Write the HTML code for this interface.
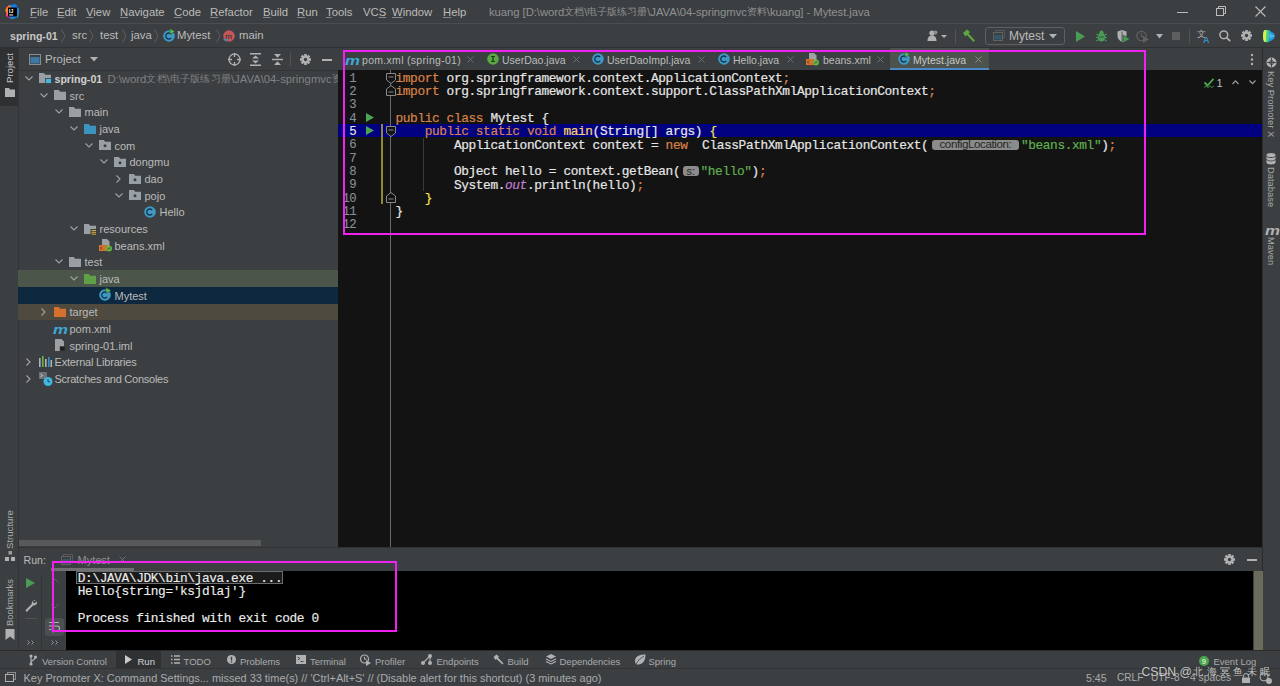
<!DOCTYPE html>
<html><head><meta charset="utf-8"><style>
*{margin:0;padding:0;box-sizing:border-box}
html,body{width:1280px;height:686px;overflow:hidden;background:#3c3f41}
body{position:relative;font-family:"Liberation Sans",sans-serif;font-size:11.3px;color:#bbbbbb}
.a{position:absolute}
.t{position:absolute;white-space:pre;line-height:14px}
.cj{display:inline-block;overflow:hidden;text-align:center;vertical-align:top;font-size:10px}
.code{position:absolute;white-space:pre;font-family:"Liberation Mono",monospace;font-size:12.8px;letter-spacing:-0.38px;line-height:13.33px;color:#e6e6e6;-webkit-text-stroke:0.2px currentColor}
svg{position:absolute;overflow:visible}
u{text-decoration-color:#85888a;text-underline-offset:0.6px}
.kw{color:#d9834a}
.str{color:#5fb04f}
.fn{color:#ffd36e}
.st{color:#c27ed6;font-style:italic}
.br{color:#f4e54d}
</style></head><body>
<div class="a" style="left:0px;top:23px;width:1280px;height:1px;background:#4b4e50;"></div>
<svg style="left:4px;top:4px;" width="16" height="16" viewBox="0 0 16 16"><polygon points="2,3 9,1 15,5 14,13 8,15 2,12" fill="#ff318c"/><polygon points="9,1 15,5 14,13 8,15" fill="#21d789"/><polygon points="5,1 12,0 15,6 13,14 6,15" fill="#087cfa" opacity="0.85"/><polygon points="1,6 5,1 8,4 4,12" fill="#fc801d"/><rect x="4" y="3.5" width="9" height="9" fill="#000"/><rect x="5.2" y="10.5" width="4" height="1" fill="#fff"/><text x="5" y="8.6" font-size="5" fill="#fff" font-family="Liberation Sans" font-weight="bold">IJ</text></svg>
<span class="t" style="left:30px;top:5px;"><u>F</u>ile</span>
<span class="t" style="left:57px;top:5px;"><u>E</u>dit</span>
<span class="t" style="left:86px;top:5px;"><u>V</u>iew</span>
<span class="t" style="left:120px;top:5px;"><u>N</u>avigate</span>
<span class="t" style="left:174px;top:5px;"><u>C</u>ode</span>
<span class="t" style="left:210px;top:5px;"><u>R</u>efactor</span>
<span class="t" style="left:263px;top:5px;"><u>B</u>uild</span>
<span class="t" style="left:297px;top:5px;"><u>R</u>un</span>
<span class="t" style="left:326px;top:5px;"><u>T</u>ools</span>
<span class="t" style="left:363px;top:5px;">VC<u>S</u></span>
<span class="t" style="left:392px;top:5px;"><u>W</u>indow</span>
<span class="t" style="left:443px;top:5px;"><u>H</u>elp</span>
<span class="t" style="left:489px;top:5px;color:#8e9193;letter-spacing:-0.06px">kuang [D:\word<span class="cj" style="width:10px">文</span><span class="cj" style="width:10px">档</span>\<span class="cj" style="width:10px">电</span><span class="cj" style="width:10px">子</span><span class="cj" style="width:10px">版</span><span class="cj" style="width:10px">练</span><span class="cj" style="width:10px">习</span><span class="cj" style="width:10px">册</span>\JAVA\04-springmvc<span class="cj" style="width:10px">资</span><span class="cj" style="width:10px">料</span>\kuang] - Mytest.java</span>
<div class="a" style="left:1177px;top:12px;width:11px;height:1px;background:#bbbbbb;"></div>
<svg style="left:1216px;top:6px;" width="11" height="11" viewBox="0 0 11 11"><rect x="0.5" y="2.5" width="7" height="7" fill="none" stroke="#bbbbbb"/><path d="M2.5 2.5V0.5H9.5V7.5H7.5" fill="none" stroke="#bbbbbb"/></svg>
<svg style="left:1255px;top:6px;" width="11" height="11" viewBox="0 0 11 11"><path d="M0.5 0.5L10.5 10.5M10.5 0.5L0.5 10.5" stroke="#bbbbbb" stroke-width="1.1"/></svg>
<div class="a" style="left:0px;top:47px;width:1280px;height:1px;background:#2f3133;"></div>
<span class="t" style="left:10px;top:29.3px;font-weight:bold;color:#c8c8c8;font-size:10.6px">spring-01</span>
<svg style="left:61px;top:29px;" width="5" height="14" viewBox="0 0 5 14"><path d="M0.5 0.5L4 7L0.5 13.5" fill="none" stroke="#5f6264" stroke-width="0.9"/></svg>
<span class="t" style="left:72px;top:28.3px;">src</span>
<svg style="left:89px;top:29px;" width="5" height="14" viewBox="0 0 5 14"><path d="M0.5 0.5L4 7L0.5 13.5" fill="none" stroke="#5f6264" stroke-width="0.9"/></svg>
<span class="t" style="left:100px;top:28.3px;">test</span>
<svg style="left:121.5px;top:29px;" width="5" height="14" viewBox="0 0 5 14"><path d="M0.5 0.5L4 7L0.5 13.5" fill="none" stroke="#5f6264" stroke-width="0.9"/></svg>
<span class="t" style="left:131px;top:28.3px;">java</span>
<svg style="left:154px;top:29px;" width="5" height="14" viewBox="0 0 5 14"><path d="M0.5 0.5L4 7L0.5 13.5" fill="none" stroke="#5f6264" stroke-width="0.9"/></svg>
<svg style="left:163px;top:30px;" width="12" height="12" viewBox="0 0 12 12"><circle cx="6" cy="6" r="5.8" fill="#3f99c2"/><path d="M8.2 4.2A3 3 0 1 0 8.2 7.8" fill="none" stroke="#15324a" stroke-width="1.3"/><polygon points="7,-1.5 12,1.5 7,4.5" fill="#4fc24f" stroke="#3c3f41" stroke-width="0.6"/></svg>
<span class="t" style="left:177px;top:28.3px;">Mytest</span>
<svg style="left:215.5px;top:29px;" width="5" height="14" viewBox="0 0 5 14"><path d="M0.5 0.5L4 7L0.5 13.5" fill="none" stroke="#5f6264" stroke-width="0.9"/></svg>
<svg style="left:223px;top:30px;" width="12" height="12" viewBox="0 0 12 12"><circle cx="6" cy="6" r="5.8" fill="#c0585a"/><text x="2.3" y="8.6" font-size="8" fill="#2b2b2b" font-family="Liberation Sans">m</text><path d="M0 9l2.5 2.5L5 9z" fill="#3592c4"/></svg>
<span class="t" style="left:239px;top:28.3px;">main</span>
<svg style="left:927px;top:30px;" width="21" height="12" viewBox="0 0 21 12"><circle cx="5" cy="3" r="2.6" fill="#afb1b3"/><path d="M0.5 11c0-4 2-5.5 4.5-5.5s4.5 1.5 4.5 5.5z" fill="#afb1b3"/><circle cx="8.5" cy="2.5" r="2" fill="#8c8e90"/><path d="M14 5l3 3l3-3z" fill="#afb1b3"/></svg>
<div class="a" style="left:955px;top:29px;width:1px;height:15px;background:#515355;"></div>
<svg style="left:962px;top:29px;" width="14" height="14" viewBox="0 0 14 14"><path d="M1 4L5 0.5L8 3L6.5 4.5L13 11.5L11.5 13L5 6L3.5 7.5z" fill="#5ca83e"/></svg>
<div class="a" style="left:985px;top:27px;width:80px;height:18px;background:#3c3f41;border:1px solid #5e6163;border-radius:3px"></div>
<svg style="left:993px;top:30px;" width="12" height="11" viewBox="0 0 12 11"><rect x="2.5" y="0.5" width="9" height="7" fill="none" stroke="#55585a"/><rect x="0.5" y="2.5" width="9" height="8" fill="#3c3f41" stroke="#606264"/><rect x="1.5" y="5" width="7" height="4.5" fill="#36566a"/></svg>
<span class="t" style="left:1009px;top:29px;font-size:12px;color:#bbbbbb">Mytest</span>
<svg style="left:1049px;top:34px;" width="8" height="5" viewBox="0 0 8 5"><path d="M0 0h8L4 4.5z" fill="#afb1b3"/></svg>
<svg style="left:1076px;top:31px;" width="9" height="11" viewBox="0 0 9 11"><path d="M0 0L9 5.5L0 11z" fill="#499c54"/></svg>
<svg style="left:1096px;top:30px;" width="11" height="12" viewBox="0 0 11 12"><ellipse cx="5.5" cy="7" rx="3.6" ry="4.6" fill="#499c54"/><circle cx="5.5" cy="2.5" r="2" fill="#499c54"/><path d="M0.5 4l2 1.5M10.5 4l-2 1.5M0 7.5h2M11 7.5H9M0.5 11l2-1.5M10.5 11l-2-1.5" stroke="#499c54" stroke-width="1.1"/><path d="M3 7h5" stroke="#3c3f41" stroke-width="0.8"/></svg>
<svg style="left:1117px;top:30px;" width="13" height="13" viewBox="0 0 13 13"><path d="M0.5 1.5L5 0L9.5 1.5V6C9.5 9 7 11 5 12C3 11 0.5 9 0.5 6z" fill="#afb1b3"/><path d="M5 1.5V11" stroke="#3c3f41" stroke-width="0.8"/><path d="M6 5L13 9L6 13z" fill="#499c54" stroke="#3c3f41" stroke-width="0.7"/></svg>
<svg style="left:1136px;top:30px;" width="14" height="13" viewBox="0 0 14 13"><circle cx="5.5" cy="6" r="4.7" fill="none" stroke="#5e6062" stroke-width="1.2"/><path d="M5.5 3v3.5h2.5" stroke="#5e6062" fill="none"/><path d="M7 6L13 9.5L7 13z" fill="#5e6062"/></svg>
<svg style="left:1156px;top:34px;" width="7" height="5" viewBox="0 0 7 5"><path d="M0 0h7L3.5 4.5z" fill="#afb1b3"/></svg>
<div class="a" style="left:1172px;top:32px;width:8px;height:8px;background:#5c5e60;"></div>
<div class="a" style="left:1189px;top:29px;width:1px;height:15px;background:#515355;"></div>
<svg style="left:1197px;top:29px;" width="14" height="14" viewBox="0 0 14 14"><text x="0" y="8" font-size="9" fill="#afb1b3" font-family="Liberation Sans">文</text><text x="6" y="13.5" font-size="9" font-weight="bold" fill="#3592c4" font-family="Liberation Sans">A</text></svg>
<svg style="left:1219px;top:30px;" width="12" height="12" viewBox="0 0 12 12"><circle cx="4.8" cy="4.8" r="3.9" fill="none" stroke="#afb1b3" stroke-width="1.5"/><path d="M7.6 7.6L11.2 11.2" stroke="#afb1b3" stroke-width="1.8"/></svg>
<svg style="left:1241px;top:30px;" width="11" height="11" viewBox="0 0 11 11"><rect x="4.2" y="0" width="2.6" height="11" fill="#afb1b3" transform="rotate(0 5.5 5.5)"/><rect x="4.2" y="0" width="2.6" height="11" fill="#afb1b3" transform="rotate(45 5.5 5.5)"/><rect x="4.2" y="0" width="2.6" height="11" fill="#afb1b3" transform="rotate(90 5.5 5.5)"/><rect x="4.2" y="0" width="2.6" height="11" fill="#afb1b3" transform="rotate(135 5.5 5.5)"/><circle cx="5.5" cy="5.5" r="3.96" fill="#afb1b3"/><circle cx="5.5" cy="5.5" r="1.65" fill="#3c3f41"/></svg>
<svg style="left:1262px;top:29px;" width="13" height="14" viewBox="0 0 13 14"><path d="M2 1.5Q6.5 -0.5 12 4.5L13 7L12 9.5Q6.5 14.5 2 12.5Q0 7 2 1.5z" fill="#1f9be0"/><path d="M2 1.5Q5 0.6 7.5 1.8L6.5 12.9Q4 13.6 2 12.5Q0 7 2 1.5z" fill="#3fd08a"/><path d="M2 1.5Q3.5 1 4.5 1.1L3.8 12.9Q2.6 13 2 12.5Q0 7 2 1.5z" fill="#d9ef50"/><path d="M7.5 4.5L13 7L7.5 9.5z" fill="#ffffff" opacity="0.25"/></svg>
<div class="a" style="left:0px;top:48px;width:18px;height:602px;background:#3c3f41;"></div>
<div class="a" style="left:0px;top:48px;width:18px;height:58px;background:#2e3032;"></div>
<div class="a" style="left:18px;top:48px;width:1px;height:602px;background:#323436;"></div>
<span class="t" style="left:2.7px;top:83px;transform-origin:0 0;transform:rotate(-90deg);font-size:9.6px;color:#c8c8c8;line-height:14px">Project</span>
<svg style="left:5px;top:88px;" width="10" height="9" viewBox="0 0 10 9"><path d="M0 0h4l1 1.5h5V9H0z" fill="#afb1b3"/></svg>
<span class="t" style="left:2.7px;top:549px;transform-origin:0 0;transform:rotate(-90deg);font-size:9.6px;color:#a9abad;line-height:14px">Structure</span>
<svg style="left:5px;top:551px;" width="11" height="11" viewBox="0 0 11 11"><rect x="3.5" y="0" width="3.5" height="3.5" fill="#9a9c9e"/><rect x="0" y="6" width="4" height="4" fill="#afb1b3"/><rect x="6" y="6" width="4" height="4" fill="#afb1b3"/></svg>
<span class="t" style="left:2.7px;top:626px;transform-origin:0 0;transform:rotate(-90deg);font-size:9.4px;color:#a9abad;line-height:14px">Bookmarks</span>
<svg style="left:5px;top:629px;" width="10" height="11" viewBox="0 0 10 11"><path d="M0.5 0h9v11L5 7.5L0.5 11z" fill="#afb1b3"/></svg>
<div class="a" style="left:19px;top:70px;width:319px;height:1px;background:#323436;"></div>
<svg style="left:29px;top:54px;" width="12" height="11" viewBox="0 0 12 11"><rect x="0.5" y="0.5" width="11" height="10" fill="none" stroke="#8a8c8e"/><rect x="1.5" y="3" width="9" height="6.5" fill="#3d7aa3"/></svg>
<span class="t" style="left:45px;top:52px;font-size:11.5px;color:#bbbbbb;line-height:14px">Project</span>
<svg style="left:90px;top:57px;" width="8" height="5" viewBox="0 0 8 5"><path d="M0 0h8L4 4.5z" fill="#afb1b3"/></svg>
<svg style="left:228px;top:53px;" width="13" height="13" viewBox="0 0 13 13"><circle cx="6.5" cy="6.5" r="5.5" fill="none" stroke="#afb1b3" stroke-width="1.3"/><path d="M6.5 0v4M6.5 9v4M0 6.5h4M9 6.5h4" stroke="#afb1b3" stroke-width="1.3"/></svg>
<svg style="left:250px;top:53px;" width="12" height="13" viewBox="0 0 12 13"><path d="M0 0.7h11M0 12.3h11" stroke="#afb1b3" stroke-width="1.4"/><path d="M5.5 2.5L9 5.5H2zM5.5 10.5L9 7.5H2z" fill="#afb1b3"/></svg>
<svg style="left:272px;top:53px;" width="12" height="13" viewBox="0 0 12 13"><path d="M0 6.5h11" stroke="#afb1b3" stroke-width="1.4"/><path d="M2 1h7L5.5 4.8zM2 12h7L5.5 8.2z" fill="#afb1b3"/></svg>
<div class="a" style="left:290px;top:52px;width:1px;height:14px;background:#505254;"></div>
<svg style="left:300px;top:54px;" width="11" height="11" viewBox="0 0 11 11"><rect x="4.2" y="0" width="2.6" height="11" fill="#afb1b3" transform="rotate(0 5.5 5.5)"/><rect x="4.2" y="0" width="2.6" height="11" fill="#afb1b3" transform="rotate(45 5.5 5.5)"/><rect x="4.2" y="0" width="2.6" height="11" fill="#afb1b3" transform="rotate(90 5.5 5.5)"/><rect x="4.2" y="0" width="2.6" height="11" fill="#afb1b3" transform="rotate(135 5.5 5.5)"/><circle cx="5.5" cy="5.5" r="3.96" fill="#afb1b3"/><circle cx="5.5" cy="5.5" r="1.65" fill="#3c3f41"/></svg>
<div class="a" style="left:322px;top:59px;width:10px;height:1.6px;background:#afb1b3;"></div>
<div class="a" style="left:18px;top:270px;width:320px;height:17px;background:#4b554a;"></div>
<div class="a" style="left:18px;top:287px;width:320px;height:17px;background:#0d283f;"></div>
<div class="a" style="left:18px;top:304px;width:320px;height:16px;background:#4e4a3f;"></div>
<div class="a" style="left:19px;top:540px;width:242px;height:6px;background:#57595b;"></div>
<svg style="left:24.5px;top:76.03px;" width="8" height="5" viewBox="0 0 8 5"><path d="M0.5 0.5L4 4L7.5 0.5" fill="none" stroke="#a0a2a4" stroke-width="1.1"/></svg>
<svg style="left:39.25px;top:73.03px;" width="12" height="10" viewBox="0 0 12 10"><path d="M0 0h4.8l1.4 1.8H12V10H0z" fill="#98a0a6"/><rect x="6.5" y="5.5" width="6" height="5" fill="#40b6e0" stroke="#3c3f41" stroke-width="0.8"/></svg>
<span class="t" style="left:54.5px;top:71.9px;font-size:11px"><b style="color:#d0d0d0;font-size:10.6px">spring-01</b></span>
<svg style="left:39.5px;top:92.7px;" width="8" height="5" viewBox="0 0 8 5"><path d="M0.5 0.5L4 4L7.5 0.5" fill="none" stroke="#a0a2a4" stroke-width="1.1"/></svg>
<svg style="left:54.25px;top:90.2px;" width="12" height="10" viewBox="0 0 12 10"><path d="M0 0h4.8l1.4 1.8H12V10H0z" fill="#98a0a6"/></svg>
<span class="t" style="left:69.5px;top:88.57000000000001px;font-size:11px">src</span>
<svg style="left:54.5px;top:109.37px;" width="8" height="5" viewBox="0 0 8 5"><path d="M0.5 0.5L4 4L7.5 0.5" fill="none" stroke="#a0a2a4" stroke-width="1.1"/></svg>
<svg style="left:69.25px;top:106.87px;" width="12" height="10" viewBox="0 0 12 10"><path d="M0 0h4.8l1.4 1.8H12V10H0z" fill="#98a0a6"/></svg>
<span class="t" style="left:84.5px;top:105.24000000000001px;font-size:11px">main</span>
<svg style="left:69.5px;top:126.04000000000002px;" width="8" height="5" viewBox="0 0 8 5"><path d="M0.5 0.5L4 4L7.5 0.5" fill="none" stroke="#a0a2a4" stroke-width="1.1"/></svg>
<svg style="left:84.25px;top:123.54000000000002px;" width="12" height="10" viewBox="0 0 12 10"><path d="M0 0h4.8l1.4 1.8H12V10H0z" fill="#3b93bf"/></svg>
<span class="t" style="left:99.5px;top:121.91000000000001px;font-size:11px">java</span>
<svg style="left:84.5px;top:142.71px;" width="8" height="5" viewBox="0 0 8 5"><path d="M0.5 0.5L4 4L7.5 0.5" fill="none" stroke="#a0a2a4" stroke-width="1.1"/></svg>
<svg style="left:99.25px;top:140.21px;" width="12" height="10" viewBox="0 0 12 10"><path d="M0 0h4.8l1.4 1.8H12V10H0z" fill="#98a0a6"/><circle cx="6" cy="5.8" r="1.5" fill="#3c3f41"/></svg>
<span class="t" style="left:114.5px;top:138.57999999999998px;font-size:11px">com</span>
<svg style="left:99.5px;top:159.38000000000002px;" width="8" height="5" viewBox="0 0 8 5"><path d="M0.5 0.5L4 4L7.5 0.5" fill="none" stroke="#a0a2a4" stroke-width="1.1"/></svg>
<svg style="left:114.25px;top:156.88000000000002px;" width="12" height="10" viewBox="0 0 12 10"><path d="M0 0h4.8l1.4 1.8H12V10H0z" fill="#98a0a6"/><circle cx="6" cy="5.8" r="1.5" fill="#3c3f41"/></svg>
<span class="t" style="left:129.5px;top:155.25px;font-size:11px">dongmu</span>
<svg style="left:116.0px;top:174.55000000000004px;" width="5" height="8" viewBox="0 0 5 8"><path d="M0.5 0.5L4 4L0.5 7.5" fill="none" stroke="#a0a2a4" stroke-width="1.1"/></svg>
<svg style="left:129.25px;top:173.55000000000004px;" width="12" height="10" viewBox="0 0 12 10"><path d="M0 0h4.8l1.4 1.8H12V10H0z" fill="#98a0a6"/><circle cx="6" cy="5.8" r="1.5" fill="#3c3f41"/></svg>
<span class="t" style="left:144.5px;top:171.92000000000002px;font-size:11px">dao</span>
<svg style="left:114.5px;top:192.72000000000003px;" width="8" height="5" viewBox="0 0 8 5"><path d="M0.5 0.5L4 4L7.5 0.5" fill="none" stroke="#a0a2a4" stroke-width="1.1"/></svg>
<svg style="left:129.25px;top:190.22000000000003px;" width="12" height="10" viewBox="0 0 12 10"><path d="M0 0h4.8l1.4 1.8H12V10H0z" fill="#98a0a6"/><circle cx="6" cy="5.8" r="1.5" fill="#3c3f41"/></svg>
<span class="t" style="left:144.5px;top:188.59px;font-size:11px">pojo</span>
<svg style="left:144.25px;top:205.89000000000001px;" width="12" height="12" viewBox="0 0 12 12"><circle cx="6" cy="6" r="5.8" fill="#3f99c2"/><path d="M8.2 4.2A3 3 0 1 0 8.2 7.8" fill="none" stroke="#15324a" stroke-width="1.3"/></svg>
<span class="t" style="left:159.5px;top:205.26px;font-size:11px">Hello</span>
<svg style="left:69.5px;top:226.06000000000003px;" width="8" height="5" viewBox="0 0 8 5"><path d="M0.5 0.5L4 4L7.5 0.5" fill="none" stroke="#a0a2a4" stroke-width="1.1"/></svg>
<svg style="left:84.25px;top:223.56000000000003px;" width="12" height="10" viewBox="0 0 12 10"><path d="M0 0h4.8l1.4 1.8H12V10H0z" fill="#98a0a6"/><rect x="6.5" y="5" width="5.5" height="6" fill="#3c3f41"/><path d="M7.5 6.5h4.5M7.5 8.3h4.5M7.5 10.1h4.5" stroke="#d4a93c" stroke-width="1"/></svg>
<span class="t" style="left:99.5px;top:221.93px;font-size:11px">resources</span>
<svg style="left:99.25px;top:239.23000000000005px;" width="13" height="12" viewBox="0 0 13 12"><path d="M3 0h5l2.5 2.5V7H3z" fill="#9ea1a3"/><rect x="0" y="6" width="8" height="6" fill="#d5712e"/><path d="M3 7.5L1.5 9L3 10.5" stroke="#2b2b2b" fill="none" stroke-width="0.8"/><circle cx="10" cy="9.5" r="3" fill="#62b543"/><path d="M8.5 10.5q1.5-2 3-1.5" stroke="#2b2b2b" fill="none" stroke-width="0.7"/></svg>
<span class="t" style="left:114.5px;top:238.60000000000002px;font-size:11px">beans.xml</span>
<svg style="left:54.5px;top:259.4px;" width="8" height="5" viewBox="0 0 8 5"><path d="M0.5 0.5L4 4L7.5 0.5" fill="none" stroke="#a0a2a4" stroke-width="1.1"/></svg>
<svg style="left:69.25px;top:256.9px;" width="12" height="10" viewBox="0 0 12 10"><path d="M0 0h4.8l1.4 1.8H12V10H0z" fill="#98a0a6"/></svg>
<span class="t" style="left:84.5px;top:255.26999999999998px;font-size:11px">test</span>
<svg style="left:69.5px;top:276.07px;" width="8" height="5" viewBox="0 0 8 5"><path d="M0.5 0.5L4 4L7.5 0.5" fill="none" stroke="#a0a2a4" stroke-width="1.1"/></svg>
<svg style="left:84.25px;top:273.57px;" width="12" height="10" viewBox="0 0 12 10"><path d="M0 0h4.8l1.4 1.8H12V10H0z" fill="#5f9f47"/></svg>
<span class="t" style="left:99.5px;top:271.94px;font-size:11px">java</span>
<svg style="left:99.25px;top:289.24px;" width="12" height="12" viewBox="0 0 12 12"><circle cx="6" cy="6" r="5.8" fill="#3f99c2"/><path d="M8.2 4.2A3 3 0 1 0 8.2 7.8" fill="none" stroke="#15324a" stroke-width="1.3"/><polygon points="7,-1.5 12,1.5 7,4.5" fill="#4fc24f" stroke="#3c3f41" stroke-width="0.6"/></svg>
<span class="t" style="left:114.5px;top:288.61px;font-size:11px">Mytest</span>
<svg style="left:41.0px;top:307.91px;" width="5" height="8" viewBox="0 0 5 8"><path d="M0.5 0.5L4 4L0.5 7.5" fill="none" stroke="#a0a2a4" stroke-width="1.1"/></svg>
<svg style="left:54.25px;top:306.91px;" width="12" height="10" viewBox="0 0 12 10"><path d="M0 0h4.8l1.4 1.8H12V10H0z" fill="#d5712e"/></svg>
<span class="t" style="left:69.5px;top:305.28000000000003px;font-size:11px">target</span>
<svg style="left:53.25px;top:323.58px;" width="16" height="10" viewBox="0 0 16 10"><text x="0" y="9.5" font-size="13" font-style="italic" font-weight="bold" fill="#3ea8d8" font-family="Liberation Sans" textLength="15" lengthAdjust="spacingAndGlyphs">m</text></svg>
<span class="t" style="left:69.5px;top:321.95px;font-size:11px">pom.xml</span>
<svg style="left:55.25px;top:339.25px;" width="10" height="12" viewBox="0 0 10 12"><path d="M0 0h6.5L9 2.5V12H0z" fill="#9ea1a3"/><rect x="5" y="7.5" width="5" height="4.5" fill="#1e1e1e" stroke="#3c3f41" stroke-width="0.6"/></svg>
<span class="t" style="left:69.5px;top:338.62px;font-size:11px">spring-01.iml</span>
<svg style="left:26.0px;top:357.92px;" width="5" height="8" viewBox="0 0 5 8"><path d="M0.5 0.5L4 4L0.5 7.5" fill="none" stroke="#a0a2a4" stroke-width="1.1"/></svg>
<svg style="left:39.25px;top:356.42px;" width="13" height="11" viewBox="0 0 13 11"><rect x="0" y="2" width="1.6" height="9" fill="#aeb3b7"/><rect x="3" y="0" width="1.6" height="11" fill="#62b543"/><rect x="6" y="3" width="1.6" height="8" fill="#aeb3b7"/><rect x="9" y="1" width="1.6" height="10" fill="#3592c4"/><rect x="11.5" y="4" width="1.6" height="7" fill="#aeb3b7"/></svg>
<span class="t" style="left:54.5px;top:355.29px;font-size:11px"><span style="letter-spacing:-0.2px">External Libraries</span></span>
<svg style="left:26.0px;top:374.59000000000003px;" width="5" height="8" viewBox="0 0 5 8"><path d="M0.5 0.5L4 4L0.5 7.5" fill="none" stroke="#a0a2a4" stroke-width="1.1"/></svg>
<svg style="left:39.25px;top:371.59000000000003px;" width="14" height="14" viewBox="0 0 14 14"><rect x="0" y="0" width="8" height="7" fill="#6e7275"/><path d="M1.5 2l2 1.5l-2 1.5" stroke="#ddd" fill="none" stroke-width="0.8"/><circle cx="9" cy="9.5" r="4.5" fill="#40b6e0"/><path d="M9 7v2.8h2" stroke="#1e3a4a" fill="none" stroke-width="0.9"/></svg>
<span class="t" style="left:54.5px;top:371.96000000000004px;font-size:11px"><span style="letter-spacing:-0.25px">Scratches and Consoles</span></span>
<span class="t" style="left:107.4px;top:71.9px;color:#7f8285">D:\word<span class="cj" style="width:10.2px">文</span><span class="cj" style="width:10.2px">档</span>\<span class="cj" style="width:10.2px">电</span><span class="cj" style="width:10.2px">子</span><span class="cj" style="width:10.2px">版</span><span class="cj" style="width:10.2px">练</span><span class="cj" style="width:10.2px">习</span><span class="cj" style="width:10.2px">册</span>\JAVA\04-springmvc<span class="cj" style="width:8px">资</span></span>
<div class="a" style="left:338px;top:48px;width:924px;height:22px;background:#3c3f41;"></div>
<div class="a" style="left:338px;top:70px;width:924px;height:477px;background:#131313;"></div>
<div class="a" style="left:338px;top:547px;width:924px;height:1px;background:#2f3133;"></div>
<svg style="left:345px;top:55px;" width="16" height="10" viewBox="0 0 16 10"><text x="0" y="9.5" font-size="13" font-style="italic" font-weight="bold" fill="#3ea8d8" font-family="Liberation Sans" textLength="15" lengthAdjust="spacingAndGlyphs">m</text></svg>
<span class="t" style="left:362px;top:52.5px;font-size:10.5px;letter-spacing:0.3px">pom.xml (spring-01)</span>
<svg style="left:467px;top:56px;" width="7" height="7" viewBox="0 0 7 7"><path d="M0.5 0.5L6.5 6.5M6.5 0.5L0.5 6.5" stroke="#6d7073" stroke-width="1"/></svg>
<svg style="left:487px;top:53px;" width="12" height="12" viewBox="0 0 12 12"><circle cx="6" cy="6" r="5.8" fill="#5aa845"/><rect x="5.3" y="3" width="1.4" height="6" fill="#1f3d1a"/><rect x="4" y="3" width="4" height="1" fill="#1f3d1a"/><rect x="4" y="8" width="4" height="1" fill="#1f3d1a"/></svg>
<span class="t" style="left:502px;top:52.5px;font-size:10.5px">UserDao.java</span>
<svg style="left:572.5px;top:56px;" width="7" height="7" viewBox="0 0 7 7"><path d="M0.5 0.5L6.5 6.5M6.5 0.5L0.5 6.5" stroke="#6d7073" stroke-width="1"/></svg>
<svg style="left:592px;top:53px;" width="12" height="12" viewBox="0 0 12 12"><circle cx="6" cy="6" r="5.8" fill="#3f99c2"/><path d="M8.2 4.2A3 3 0 1 0 8.2 7.8" fill="none" stroke="#15324a" stroke-width="1.3"/></svg>
<span class="t" style="left:607px;top:52.5px;font-size:10.5px">UserDaoImpl.java</span>
<svg style="left:698px;top:56px;" width="7" height="7" viewBox="0 0 7 7"><path d="M0.5 0.5L6.5 6.5M6.5 0.5L0.5 6.5" stroke="#6d7073" stroke-width="1"/></svg>
<svg style="left:717.5px;top:53px;" width="12" height="12" viewBox="0 0 12 12"><circle cx="6" cy="6" r="5.8" fill="#3f99c2"/><path d="M8.2 4.2A3 3 0 1 0 8.2 7.8" fill="none" stroke="#15324a" stroke-width="1.3"/></svg>
<span class="t" style="left:733px;top:52.5px;font-size:10.5px">Hello.java</span>
<svg style="left:787px;top:56px;" width="7" height="7" viewBox="0 0 7 7"><path d="M0.5 0.5L6.5 6.5M6.5 0.5L0.5 6.5" stroke="#6d7073" stroke-width="1"/></svg>
<svg style="left:806px;top:53px;" width="13" height="12" viewBox="0 0 13 12"><path d="M3 0h5l2.5 2.5V7H3z" fill="#9ea1a3"/><rect x="0" y="6" width="8" height="6" fill="#d5712e"/><path d="M3 7.5L1.5 9L3 10.5" stroke="#2b2b2b" fill="none" stroke-width="0.8"/><circle cx="10" cy="9.5" r="3" fill="#62b543"/><path d="M8.5 10.5q1.5-2 3-1.5" stroke="#2b2b2b" fill="none" stroke-width="0.7"/></svg>
<span class="t" style="left:823px;top:52.5px;font-size:10.5px">beans.xml</span>
<svg style="left:877px;top:56px;" width="7" height="7" viewBox="0 0 7 7"><path d="M0.5 0.5L6.5 6.5M6.5 0.5L0.5 6.5" stroke="#6d7073" stroke-width="1"/></svg>
<div class="a" style="left:890px;top:48px;width:99px;height:22px;background:#4c534d;"></div>
<div class="a" style="left:890px;top:67.5px;width:99px;height:2.5px;background:#4a88c7;"></div>
<svg style="left:897.5px;top:53px;" width="12" height="12" viewBox="0 0 12 12"><circle cx="6" cy="6" r="5.8" fill="#3f99c2"/><path d="M8.2 4.2A3 3 0 1 0 8.2 7.8" fill="none" stroke="#15324a" stroke-width="1.3"/><polygon points="7,-1.5 12,1.5 7,4.5" fill="#4fc24f" stroke="#3c3f41" stroke-width="0.6"/></svg>
<span class="t" style="left:913px;top:52.5px;color:#c8c8c8;font-size:10.5px">Mytest.java</span>
<svg style="left:975px;top:56px;" width="7" height="7" viewBox="0 0 7 7"><path d="M0.5 0.5L6.5 6.5M6.5 0.5L0.5 6.5" stroke="#8a8d8f" stroke-width="1"/></svg>
<svg style="left:1250px;top:53px;" width="4" height="13" viewBox="0 0 4 13"><circle cx="2" cy="2" r="1.2" fill="#afb1b3"/><circle cx="2" cy="6.5" r="1.2" fill="#afb1b3"/><circle cx="2" cy="11" r="1.2" fill="#afb1b3"/></svg>
<div class="a" style="left:338px;top:124px;width:924px;height:13.3px;background:#000080;"></div>
<div class="a" style="left:390px;top:70px;width:1px;height:477px;background:#6a6a6a;"></div>
<span class="code" style="left:340px;top:72.60px;width:16px;text-align:right;color:#86909a;font-size:12.3px;letter-spacing:-0.6px;-webkit-text-stroke:0.1px currentColor">1</span>
<span class="code" style="left:340px;top:85.93px;width:16px;text-align:right;color:#86909a;font-size:12.3px;letter-spacing:-0.6px;-webkit-text-stroke:0.1px currentColor">2</span>
<span class="code" style="left:340px;top:99.26px;width:16px;text-align:right;color:#86909a;font-size:12.3px;letter-spacing:-0.6px;-webkit-text-stroke:0.1px currentColor">3</span>
<span class="code" style="left:340px;top:112.59px;width:16px;text-align:right;color:#86909a;font-size:12.3px;letter-spacing:-0.6px;-webkit-text-stroke:0.1px currentColor">4</span>
<span class="code" style="left:340px;top:125.92px;width:16px;text-align:right;color:#e8e8e8;font-size:12.3px;letter-spacing:-0.6px;-webkit-text-stroke:0.1px currentColor">5</span>
<span class="code" style="left:340px;top:139.25px;width:16px;text-align:right;color:#86909a;font-size:12.3px;letter-spacing:-0.6px;-webkit-text-stroke:0.1px currentColor">6</span>
<span class="code" style="left:340px;top:152.58px;width:16px;text-align:right;color:#86909a;font-size:12.3px;letter-spacing:-0.6px;-webkit-text-stroke:0.1px currentColor">7</span>
<span class="code" style="left:340px;top:165.91px;width:16px;text-align:right;color:#86909a;font-size:12.3px;letter-spacing:-0.6px;-webkit-text-stroke:0.1px currentColor">8</span>
<span class="code" style="left:340px;top:179.24px;width:16px;text-align:right;color:#86909a;font-size:12.3px;letter-spacing:-0.6px;-webkit-text-stroke:0.1px currentColor">9</span>
<span class="code" style="left:340px;top:192.57px;width:16px;text-align:right;color:#86909a;font-size:12.3px;letter-spacing:-0.6px;-webkit-text-stroke:0.1px currentColor">10</span>
<span class="code" style="left:340px;top:205.90px;width:16px;text-align:right;color:#86909a;font-size:12.3px;letter-spacing:-0.6px;-webkit-text-stroke:0.1px currentColor">11</span>
<span class="code" style="left:340px;top:219.23px;width:16px;text-align:right;color:#86909a;font-size:12.3px;letter-spacing:-0.6px;-webkit-text-stroke:0.1px currentColor">12</span>
<svg style="left:366px;top:112.79px;" width="8" height="9" viewBox="0 0 8 9"><path d="M0 0L8 4.5L0 9z" fill="#4ba552"/></svg>
<svg style="left:366px;top:126.11999999999998px;" width="8" height="9" viewBox="0 0 8 9"><path d="M0 0L8 4.5L0 9z" fill="#4ba552"/></svg>
<div class="a" style="left:381.3px;top:124px;width:1.8px;height:80px;background:#8f8a32;"></div>
<svg style="left:385.5px;top:72.5px;" width="10" height="11" viewBox="0 0 10 11"><path d="M0.5 0.5h9v6.5L5 10.5L0.5 7z" fill="#131313" stroke="#8a8a8a" stroke-width="1"/><path d="M2.5 4h5" stroke="#8a8a8a" stroke-width="1"/></svg>
<svg style="left:385.5px;top:85px;" width="10" height="11" viewBox="0 0 10 11"><path d="M0.5 10.5h9V4L5 0.5L0.5 4z" fill="#131313" stroke="#8a8a8a" stroke-width="1"/><path d="M2.5 7h5" stroke="#8a8a8a" stroke-width="1"/></svg>
<svg style="left:385.5px;top:125.5px;" width="10" height="11" viewBox="0 0 10 11"><path d="M0.5 0.5h9v6.5L5 10.5L0.5 7z" fill="#131313" stroke="#8a8a8a" stroke-width="1"/><path d="M2.5 4h5" stroke="#8a8a8a" stroke-width="1"/></svg>
<svg style="left:385.5px;top:192px;" width="10" height="11" viewBox="0 0 10 11"><path d="M0.5 10.5h9V4L5 0.5L0.5 4z" fill="#131313" stroke="#8a8a8a" stroke-width="1"/><path d="M2.5 7h5" stroke="#8a8a8a" stroke-width="1"/></svg>
<div class="a" style="left:422.5px;top:137.5px;width:1px;height:53px;background:#3a3a3a;"></div>
<span class="code" style="left:395.5px;top:71.90px"><span class="kw">import</span> org.springframework.context.ApplicationContext<span class="kw">;</span></span>
<span class="code" style="left:395.5px;top:85.23px"><span class="kw">import</span> org.springframework.context.support.ClassPathXmlApplicationContext<span class="kw">;</span></span>
<span class="code" style="left:395.5px;top:111.89px"><span class="kw">public class</span> Mytest {</span>
<span class="code" style="left:395.5px;top:125.22px">    <span class="kw">public static void</span> <span class="fn">main</span>(String[] args) <span class="br">{</span></span>
<span class="code" style="left:395.5px;top:138.55px">        ApplicationContext context = <span class="kw">new</span>  ClassPathXmlApplicationContext(</span>
<span class="code" style="left:395.5px;top:165.21px">        Object hello = context.getBean(</span>
<span class="code" style="left:395.5px;top:178.54px">        System.<span class="st">out</span>.println(hello)<span class="kw">;</span></span>
<span class="code" style="left:395.5px;top:191.87px">    <span class="br">}</span></span>
<span class="code" style="left:395.5px;top:205.20px">}</span>
<div class="a" style="left:932.2px;top:139.55px;width:86.5px;height:10px;background:#8b8b8b;border-radius:3px"></div>
<span class="t" style="left:932.2px;top:136.85px;width:86.5px;text-align:center;font-size:11.6px;color:#262626;letter-spacing:-0.4px;line-height:14px">configLocation:</span>
<div class="a" style="left:683px;top:166.21px;width:15.7px;height:10px;background:#8b8b8b;border-radius:3px"></div>
<span class="t" style="left:683px;top:163.51px;width:15.7px;text-align:center;font-size:11px;color:#262626;letter-spacing:0px;line-height:14px">s:</span>
<span class="code" style="left:1020.9px;top:138.55px"><span class="str">"beans.xml"</span>)<span class="kw">;</span></span>
<span class="code" style="left:700.5px;top:165.21px"><span class="str">"hello"</span>)<span class="kw">;</span></span>
<svg style="left:1204px;top:78px;" width="10" height="10" viewBox="0 0 10 10"><path d="M0.5 4.5L3.5 7.5L9.5 0.8" fill="none" stroke="#4ea64e" stroke-width="1.8"/><path d="M0 9.5l2-1.5 2 1.5 2-1.5 2 1.5 2-1.5" fill="none" stroke="#4ea64e" stroke-width="0.8"/></svg>
<span class="t" style="left:1216.5px;top:75.5px;font-size:11px;color:#bfc4c8">1</span>
<svg style="left:1232px;top:79.5px;" width="7" height="4.5" viewBox="0 0 7 4.5"><path d="M0.5 4L3.5 0.8L6.5 4" fill="none" stroke="#a0a0a0" stroke-width="1.1"/></svg>
<svg style="left:1249px;top:80px;" width="7" height="4.5" viewBox="0 0 7 4.5"><path d="M0.5 0.5L3.5 3.7L6.5 0.5" fill="none" stroke="#a0a0a0" stroke-width="1.1"/></svg>
<div class="a" style="left:1262px;top:48px;width:1px;height:602px;background:#2b2b2b;"></div>
<div class="a" style="left:1263px;top:48px;width:17px;height:602px;background:#3c3f41;"></div>
<svg style="left:1266px;top:57px;" width="11" height="11" viewBox="0 0 11 11"><circle cx="5.5" cy="5.5" r="5" fill="#afb1b3"/><path d="M1 5.5h9M5.5 1v9" stroke="#3c3f41" stroke-width="0.9"/><circle cx="5.5" cy="5.5" r="2" fill="none" stroke="#3c3f41" stroke-width="0.9"/></svg>
<span class="t" style="left:1277.5px;top:71px;transform-origin:0 0;transform:rotate(90deg);font-size:9.4px;color:#a9abad;line-height:14px">Key Promoter X</span>
<svg style="left:1266px;top:153px;" width="10" height="11" viewBox="0 0 10 11"><ellipse cx="5" cy="2" rx="4.5" ry="2" fill="#afb1b3"/><path d="M0.5 3v6.5c0 1 2 2 4.5 2s4.5-1 4.5-2V3c0 1-2 2-4.5 2S0.5 4 0.5 3z" fill="#afb1b3"/><path d="M0.5 6c0 1 2 2 4.5 2s4.5-1 4.5-2" stroke="#3c3f41" fill="none" stroke-width="0.8"/></svg>
<span class="t" style="left:1277.5px;top:167px;transform-origin:0 0;transform:rotate(90deg);font-size:9.4px;color:#a9abad;line-height:14px">Database</span>
<svg style="left:1265px;top:225px;" width="16" height="10" viewBox="0 0 16 10"><text x="0" y="9.5" font-size="13" font-style="italic" font-weight="bold" fill="#afb1b3" font-family="Liberation Sans" textLength="15" lengthAdjust="spacingAndGlyphs">m</text></svg>
<span class="t" style="left:1277.5px;top:237px;transform-origin:0 0;transform:rotate(90deg);font-size:9.4px;color:#a9abad;line-height:14px">Maven</span>
<div class="a" style="left:19px;top:547px;width:1243px;height:1px;background:#2f3133;"></div>
<div class="a" style="left:19px;top:549px;width:1243px;height:22px;background:#3c3f41;"></div>
<span class="t" style="left:23.5px;top:553.2px;font-size:10.6px;color:#bbbbbb">Run:</span>
<svg style="left:61px;top:554px;" width="12" height="11" viewBox="0 0 12 11"><rect x="2.5" y="0.5" width="9" height="7" fill="none" stroke="#55585a"/><rect x="0.5" y="2.5" width="9" height="8" fill="#3c3f41" stroke="#606264"/><rect x="1.5" y="5" width="7" height="4.5" fill="#36566a"/></svg>
<span class="t" style="left:77.5px;top:553px;font-size:11px;color:#8c8f91">Mytest</span>
<svg style="left:118.5px;top:556px;" width="7" height="7" viewBox="0 0 7 7"><path d="M0.5 0.5L6.5 6.5M6.5 0.5L0.5 6.5" stroke="#6d7073" stroke-width="1"/></svg>
<div class="a" style="left:51px;top:568px;width:83px;height:2.5px;background:#6e7072;"></div>
<svg style="left:1224px;top:554px;" width="11" height="11" viewBox="0 0 11 11"><rect x="4.2" y="0" width="2.6" height="11" fill="#afb1b3" transform="rotate(0 5.5 5.5)"/><rect x="4.2" y="0" width="2.6" height="11" fill="#afb1b3" transform="rotate(45 5.5 5.5)"/><rect x="4.2" y="0" width="2.6" height="11" fill="#afb1b3" transform="rotate(90 5.5 5.5)"/><rect x="4.2" y="0" width="2.6" height="11" fill="#afb1b3" transform="rotate(135 5.5 5.5)"/><circle cx="5.5" cy="5.5" r="3.96" fill="#afb1b3"/><circle cx="5.5" cy="5.5" r="1.65" fill="#3c3f41"/></svg>
<div class="a" style="left:1247px;top:559px;width:10px;height:1.6px;background:#afb1b3;"></div>
<div class="a" style="left:19px;top:571px;width:47px;height:79px;background:#3c3f41;"></div>
<div class="a" style="left:41px;top:575px;width:1px;height:75px;background:#323436;"></div>
<svg style="left:26px;top:578px;" width="9" height="10" viewBox="0 0 9 10"><path d="M0 0L9 5L0 10z" fill="#499c54"/></svg>
<svg style="left:24.5px;top:599px;" width="12" height="12" viewBox="0 0 12 12"><path d="M11 1.5a3.2 3.2 0 0 0-4.3 3.6L0.8 11a1 1 0 0 0 1.4 1.4l5.9-5.9A3.2 3.2 0 0 0 11.8 2.2L9.8 4.2L8.3 3.8L8 2.3z" fill="#afb1b3"/></svg>
<div class="a" style="left:25px;top:618px;width:12px;height:1px;background:#515355;"></div>
<svg style="left:27px;top:640px;" width="8" height="5" viewBox="0 0 8 5"><path d="M0.5 0.5L2.5 2.5L0.5 4.5M4.5 0.5L6.5 2.5L4.5 4.5" fill="none" stroke="#a0a2a4" stroke-width="0.9"/></svg>
<svg style="left:50.5px;top:578px;" width="8" height="6" viewBox="0 0 8 6"><path d="M0.5 5L4 1L7.5 5" fill="none" stroke="#5c5e60" stroke-width="1"/></svg>
<svg style="left:50.5px;top:603px;" width="8" height="6" viewBox="0 0 8 6"><path d="M0.5 1L4 5L7.5 1" fill="none" stroke="#5c5e60" stroke-width="1"/></svg>
<div class="a" style="left:45px;top:618px;width:18.5px;height:18px;background:#4c5052;border-radius:3px"></div>
<svg style="left:48px;top:621px;" width="12" height="12" viewBox="0 0 12 12"><path d="M1 1.5h10M1 5h8a2.5 2.5 0 0 1 0 5H5M1 8.5h2.5" fill="none" stroke="#afb1b3" stroke-width="1.2"/><path d="M5.5 8L3.8 10L5.5 12z" fill="#afb1b3"/></svg>
<svg style="left:51px;top:640px;" width="8" height="5" viewBox="0 0 8 5"><path d="M0.5 0.5L2.5 2.5L0.5 4.5M4.5 0.5L6.5 2.5L4.5 4.5" fill="none" stroke="#a0a2a4" stroke-width="0.9"/></svg>
<div class="a" style="left:66px;top:571px;width:1187px;height:79px;background:#000000;"></div>
<div class="a" style="left:1253.5px;top:571px;width:9px;height:79px;background:#6b6b5c;"></div>
<div class="a" style="left:76px;top:571px;width:207px;height:13px;background:#1b1b1b;border:1px solid #6c6c6c"></div>
<span class="code" style="left:77.8px;top:572.10px;color:#ececec;-webkit-text-stroke:0.15px currentColor">D:\JAVA\JDK\bin\java.exe ...</span>
<span class="code" style="left:77.8px;top:585.43px;color:#ececec;-webkit-text-stroke:0.15px currentColor">Hello{string='ksjdlaj'}</span>
<span class="code" style="left:77.8px;top:612.09px;color:#ececec;-webkit-text-stroke:0.15px currentColor">Process finished with exit code 0</span>
<div class="a" style="left:0px;top:650px;width:1280px;height:1px;background:#2b2b2b;"></div>
<div class="a" style="left:0px;top:651px;width:1280px;height:17px;background:#3c3f41;"></div>
<div class="a" style="left:116px;top:651px;width:45px;height:17px;background:#2f3133;"></div>
<svg style="left:29px;top:654px;" width="8" height="12" viewBox="0 0 8 12"><circle cx="2" cy="2" r="1.6" fill="#afb1b3"/><circle cx="2" cy="10" r="1.6" fill="#afb1b3"/><circle cx="6.5" cy="3" r="1.6" fill="#afb1b3"/><path d="M2 2V10M6.5 3c0 3-4.5 3-4.5 6" stroke="#afb1b3" fill="none" stroke-width="1.2"/></svg>
<span class="t" style="left:42px;top:654.5px;font-size:9.5px;color:#a9abad">Version Control</span>
<svg style="left:124.5px;top:655px;" width="7" height="9" viewBox="0 0 7 9"><path d="M0 0L7 4.5L0 9z" fill="#c8c8c8"/></svg>
<span class="t" style="left:137.5px;top:654.5px;font-size:9.5px;color:#d8d8d8">Run</span>
<svg style="left:170.5px;top:655px;" width="9" height="9" viewBox="0 0 9 9"><path d="M0 1h1.5M0 4.5h1.5M0 8h1.5M3 1h6M3 4.5h6M3 8h6" stroke="#afb1b3" stroke-width="1.3"/></svg>
<span class="t" style="left:183.5px;top:654.5px;font-size:9.5px;color:#a9abad">TODO</span>
<svg style="left:227px;top:655px;" width="9" height="9" viewBox="0 0 9 9"><circle cx="4.5" cy="4.5" r="4.5" fill="#afb1b3"/><rect x="3.8" y="1.8" width="1.4" height="3.8" fill="#3c3f41"/><rect x="3.8" y="6.4" width="1.4" height="1.3" fill="#3c3f41"/></svg>
<span class="t" style="left:240px;top:654.5px;font-size:9.5px;color:#a9abad">Problems</span>
<svg style="left:296px;top:655px;" width="10" height="9" viewBox="0 0 10 9"><rect x="0" y="0" width="10" height="9" fill="#afb1b3"/><path d="M1.8 2l2 1.5l-2 1.5M4.5 6.5h3" stroke="#3c3f41" fill="none" stroke-width="0.9"/></svg>
<span class="t" style="left:310px;top:654.5px;font-size:9.5px;color:#a9abad">Terminal</span>
<svg style="left:360px;top:654px;" width="11" height="11" viewBox="0 0 11 11"><circle cx="4.5" cy="5" r="4" fill="none" stroke="#afb1b3" stroke-width="1.2"/><path d="M4.5 2.8V5.2H6.5" stroke="#afb1b3" fill="none"/><path d="M6 6L11 9L6 12z" fill="#afb1b3"/></svg>
<span class="t" style="left:375px;top:654.5px;font-size:9.5px;color:#a9abad">Profiler</span>
<svg style="left:421px;top:654px;" width="12" height="11" viewBox="0 0 12 11"><circle cx="9" cy="2" r="2" fill="#afb1b3"/><circle cx="2" cy="9" r="2" fill="#afb1b3"/><circle cx="9" cy="9" r="2" fill="#afb1b3"/><path d="M9 2L2 9M9 2V9" stroke="#afb1b3" stroke-width="1.1"/></svg>
<span class="t" style="left:436.5px;top:654.5px;font-size:9.5px;color:#a9abad">Endpoints</span>
<svg style="left:493px;top:654px;" width="11" height="11" viewBox="0 0 11 11"><path d="M0.5 3L3.5 0.5L6 2.5L5 3.5L10.5 9.5L9.5 10.5L3.5 5L2.5 6z" fill="#afb1b3"/></svg>
<span class="t" style="left:507.5px;top:654.5px;font-size:9.5px;color:#a9abad">Build</span>
<svg style="left:545.5px;top:654px;" width="10" height="11" viewBox="0 0 10 11"><path d="M5 0L10 2.5L5 5L0 2.5z" fill="#afb1b3"/><path d="M0 5L5 7.5L10 5M0 7.5L5 10L10 7.5" stroke="#afb1b3" fill="none" stroke-width="1.1"/></svg>
<span class="t" style="left:559.5px;top:654.5px;font-size:9.5px;color:#a9abad">Dependencies</span>
<svg style="left:633.5px;top:654px;" width="12" height="11" viewBox="0 0 12 11"><path d="M11.5 0.5C6 0.5 0.5 2 1 8c0.3 2 2 2.8 4 2.5C10 10 11.5 5 11.5 0.5z" fill="#afb1b3"/><path d="M2 10C4 6 7 4 10 2" stroke="#3c3f41" fill="none" stroke-width="0.8"/></svg>
<span class="t" style="left:648.5px;top:654.5px;font-size:9.5px;color:#a9abad">Spring</span>
<svg style="left:1199px;top:656px;" width="10" height="10" viewBox="0 0 10 10"><circle cx="5" cy="5" r="5" fill="#4aa74e"/><text x="2.7" y="8" font-size="7.5" fill="#fff" font-family="Liberation Sans">9</text></svg>
<span class="t" style="left:1213.5px;top:654.5px;font-size:9.5px;color:#a9abad">Event Log</span>
<div class="a" style="left:0px;top:668px;width:1280px;height:1px;background:#323436;"></div>
<div class="a" style="left:0px;top:669px;width:1280px;height:17px;background:#3c3f41;"></div>
<svg style="left:5px;top:672px;" width="11" height="10" viewBox="0 0 11 10"><rect x="2.5" y="0.5" width="8" height="7" fill="none" stroke="#8a8c8e"/><rect x="0.5" y="2.5" width="8" height="7" fill="#3c3f41" stroke="#afb1b3"/></svg>
<span class="t" style="left:23.5px;top:670.5px;font-size:10.95px;color:#a9abad">Key Promoter X: Command Settings... missed 33 time(s) // 'Ctrl+Alt+S' // (Disable alert for this shortcut) (3 minutes ago)</span>
<span class="t" style="left:1086px;top:671px;font-size:10.6px;color:#a9abad">5:45</span>
<span class="t" style="left:1117px;top:671px;font-size:10.1px;color:#a9abad">CRLF</span>
<span class="t" style="left:1151px;top:671px;font-size:10.1px;color:#a9abad">UTF-8</span>
<span class="t" style="left:1190px;top:671px;font-size:10.3px;color:#a9abad">4 spaces</span>
<svg style="left:1242px;top:673px;" width="8" height="10" viewBox="0 0 8 10"><path d="M1.5 4.5V3a2.5 2.5 0 0 1 5 0v1.5" fill="none" stroke="#afb1b3"/><rect x="0" y="4.5" width="8" height="5.5" fill="#afb1b3"/></svg>
<svg style="left:1260px;top:672px;" width="12" height="12" viewBox="0 0 12 12"><circle cx="4" cy="5" r="4" fill="none" stroke="#afb1b3"/><circle cx="9" cy="9" r="3" fill="#afb1b3"/></svg>
<span class="t" style="left:1141.5px;top:663.5px;font-size:13px;color:rgba(240,240,240,0.82);line-height:16px;text-shadow:0 0 1px rgba(0,0,0,0.5)"><span style="font-size:12.2px">CSDN @</span><span class="cj" style="width:13.3px">北</span><span class="cj" style="width:13.3px">海</span><span class="cj" style="width:13.3px">冥</span><span class="cj" style="width:13.3px">鱼</span><span class="cj" style="width:13.3px">未</span><span class="cj" style="width:13.3px">眠</span></span>
<div class="a" style="left:343px;top:50px;width:803px;height:184.5px;background:transparent;border:2.6px solid #f020f0"></div>
<div class="a" style="left:51.5px;top:561px;width:345.5px;height:71px;background:transparent;border:2.6px solid #f020f0"></div>
</body></html>
